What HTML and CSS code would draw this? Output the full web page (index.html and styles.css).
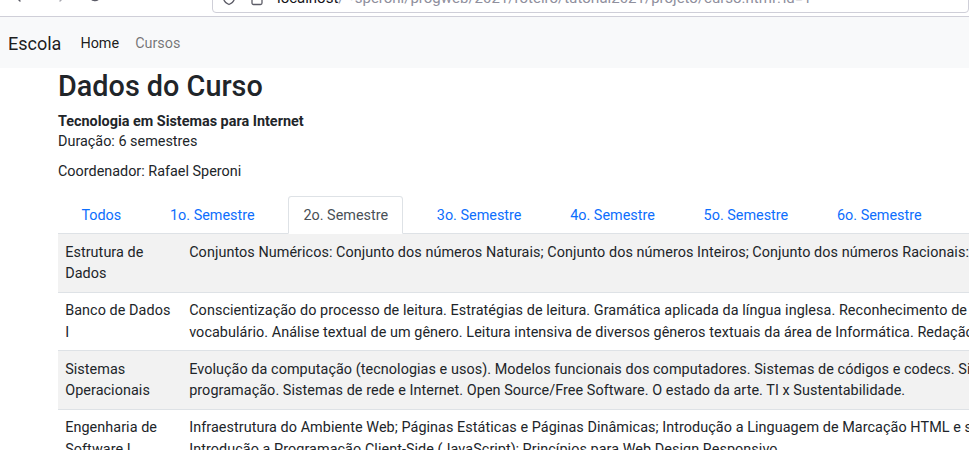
FILE: index.html
```html
<!DOCTYPE html>
<html lang="pt-BR">
<head>
<meta charset="utf-8">
<title>Dados do Curso</title>
<link rel="stylesheet" href="styles.css">
</head>
<body>
<div class="chrome">
  <div class="toolbar">
    <span class="tb-btn back"><svg width="16" height="16" viewBox="0 0 16 16"><path d="M10 2 L4 8 L10 14" fill="none" stroke="#5b5b66" stroke-width="1.4" stroke-linecap="round" stroke-linejoin="round"/></svg></span>
    <span class="tb-btn fwd"><svg width="16" height="16" viewBox="0 0 16 16"><path d="M6 2 L12 8 L6 14" fill="none" stroke="#a8a8b0" stroke-width="1.4" stroke-linecap="round" stroke-linejoin="round"/></svg></span>
    <span class="tb-btn reload"><svg width="16" height="16" viewBox="0 0 16 16"><path d="M13.5 8 A5.5 5.5 0 1 1 11.5 3.8" fill="none" stroke="#5b5b66" stroke-width="1.4" stroke-linecap="round"/><path d="M9.5 2.5 L12.5 3 L12 6" fill="none" stroke="#5b5b66" stroke-width="1.4" stroke-linecap="round" stroke-linejoin="round"/></svg></span>
    <div class="urlbar">
      <svg class="shield" width="16" height="16" viewBox="0 0 16 16"><path d="M8 1.5 L13.5 3.5 V7.5 C13.5 11 11 13.3 8 14.5 C5 13.3 2.5 11 2.5 7.5 V3.5 Z" fill="none" stroke="#5b5b66" stroke-width="1.3" stroke-linejoin="round"/></svg>
      <svg class="lock" width="16" height="16" viewBox="0 0 16 16"><rect x="3" y="7" width="10" height="7.5" rx="1.5" fill="none" stroke="#5b5b66" stroke-width="1.3"/><path d="M5 7 V5 A3 3 0 0 1 11 5 V7" fill="none" stroke="#5b5b66" stroke-width="1.3"/></svg>
      <span class="url"><span class="host">localhost</span>/~speroni/progweb/2021/roteiro/tutorial2021/projeto/curso.html?id=1</span>
    </div>
  </div>
</div>

<nav class="navbar">
  <a class="brand" href="#">Escola</a>
  <ul class="nav-links">
    <li><a class="nav-link active" href="#">Home</a></li>
    <li><a class="nav-link" href="#">Cursos</a></li>
  </ul>
</nav>

<main class="container">
  <h2 class="title">Dados do Curso</h2>
  <div class="info">
    <strong class="course-name">Tecnologia em Sistemas para Internet</strong>
    <p class="duration">Duração: 6 semestres</p>
    <p class="coord">Coordenador: Rafael Speroni</p>
  </div>

  <ul class="tabs">
    <li><a class="tab" href="#">Todos</a></li>
    <li><a class="tab" href="#">1o. Semestre</a></li>
    <li><a class="tab active" href="#">2o. Semestre</a></li>
    <li><a class="tab" href="#">3o. Semestre</a></li>
    <li><a class="tab" href="#">4o. Semestre</a></li>
    <li><a class="tab" href="#">5o. Semestre</a></li>
    <li><a class="tab" href="#">6o. Semestre</a></li>
  </ul>

  <table class="table">
    <colgroup>
      <col class="col-name">
      <col class="col-desc">
    </colgroup>
    <tbody>
      <tr class="odd">
        <td>Estrutura de Dados</td>
        <td class="desc">Conjuntos Numéricos: Conjunto dos números Naturais; Conjunto dos números Inteiros; Conjunto dos números Racionais: Conjunto dos números Irracionais; Conjunto dos números Reais.</td>
      </tr>
      <tr>
        <td>Banco de Dados I</td>
        <td class="desc">Conscientização do processo de leitura. Estratégias de leitura. Gramática aplicada da língua inglesa. Reconhecimento de gêneros textuais. Ampliação de<br>vocabulário. Análise textual de um gênero. Leitura intensiva de diversos gêneros textuais da área de Informática. Redação técnica.</td>
      </tr>
      <tr class="odd">
        <td>Sistemas Operacionais</td>
        <td class="desc">Evolução da computação (tecnologias e usos). Modelos funcionais dos computadores. Sistemas de códigos e codecs. Sistemas operacionais e linguagens de<br>programação. Sistemas de rede e Internet. Open Source/Free Software. O estado da arte. TI x Sustentabilidade.</td>
      </tr>
      <tr>
        <td>Engenharia de Software I</td>
        <td class="desc">Infraestrutura do Ambiente Web; Páginas Estáticas e Páginas Dinâmicas; Introdução a Linguagem de Marcação HTML e sua estrutura; Folhas de Estilo CSS;<br>Introdução a Programação Client-Side (JavaScript); Princípios para Web Design Responsivo.</td>
      </tr>
    </tbody>
  </table>
</main>
</body>
</html>
```
FILE: styles.css
```css
html, body {
  margin: 0;
  padding: 0;
}
body {
  font-family: Roboto, "Liberation Sans", sans-serif;
  font-size: 14.4px;
  line-height: 21.6px;
  color: #212529;
  background: #fff;
  overflow: hidden;
  width: 969px;
  height: 450px;
}
a { text-decoration: none; }
ul { list-style: none; margin: 0; padding: 0; }

/* browser chrome (cropped) */
.chrome {
  height: 16px;
  overflow: hidden;
  border-bottom: 1px solid #cfcfd8;
  background: #fff;
}
.toolbar {
  display: flex;
  align-items: center;
  height: 40px;
  margin-top: -25px;
  padding-left: 10px;
}
.tb-btn {
  width: 16px;
  height: 16px;
  display: flex;
  margin-right: 28px;
}
.tb-btn.fwd { margin-right: 17px; }
.tb-btn.reload { margin-right: 0; }
.urlbar {
  margin-left: 109px;
  flex: 1;
  height: 36px;
  border: 1px solid #cfcfd8;
  border-radius: 4px;
  display: flex;
  align-items: center;
  padding: 5px 0 0 8px;
  box-sizing: border-box;
}
.shield { margin-right: 12px; }
.lock { margin-right: 12px; }
.url {
  font-family: Roboto, sans-serif;
  font-size: 15px;
  color: #8f8f9d;
  white-space: nowrap;
  margin-top: 2px;
}
.url .host { color: #15141a; }

/* navbar */
.navbar {
  background: #f8f9fa;
  height: 51px;
  box-sizing: border-box;
  padding: 3px 0 0 8px;
  display: flex;
  align-items: center;
}
.brand {
  font-size: 18px;
  color: rgba(0,0,0,.9);
  margin-right: 19px;
}
.nav-links { display: flex; gap: 16px; }
.nav-link {
  color: rgba(0,0,0,.55);
  font-size: 14.4px;
}
.nav-link.active { color: rgba(0,0,0,.9); }

/* content */
.container {
  padding-left: 58px;
}
.title {
  font-size: 28.8px;
  font-weight: 500;
  line-height: 34.6px;
  margin: 1px 0 0;
}
.info { margin-top: 7px; }
.course-name {
  display: block;
  font-weight: 700;
  line-height: 21.6px;
}
.duration {
  margin: -1px 0 0;
}
.coord {
  margin: 8px 0 0;
}

.tabs {
  display: flex;
  gap: 18px;
  padding-left: 8px;
  margin-top: 14px;
  border-bottom: 1px solid #dee2e6;
  width: 1300px;
}
.tabs li { margin-bottom: -1px; }
.tab {
  display: block;
  padding: 7.2px 14.4px;
  border: 1px solid transparent;
  border-radius: 3.4px 3.4px 0 0;
  color: #0d6efd;
}
.tab.active {
  color: #495057;
  background: #fff;
  border-color: #dee2e6 #dee2e6 #fff;
}

.table {
  border-collapse: collapse;
  table-layout: fixed;
  width: 1400px;
  letter-spacing: 0.06px;
}
.col-name { width: 124px; }
.table td {
  padding: 7.2px;
  vertical-align: top;
  border-bottom: 1px solid #dee2e6;
}
.table tr.odd td { background: #f2f2f2; }
.table .desc { white-space: nowrap; overflow: hidden; }
```
